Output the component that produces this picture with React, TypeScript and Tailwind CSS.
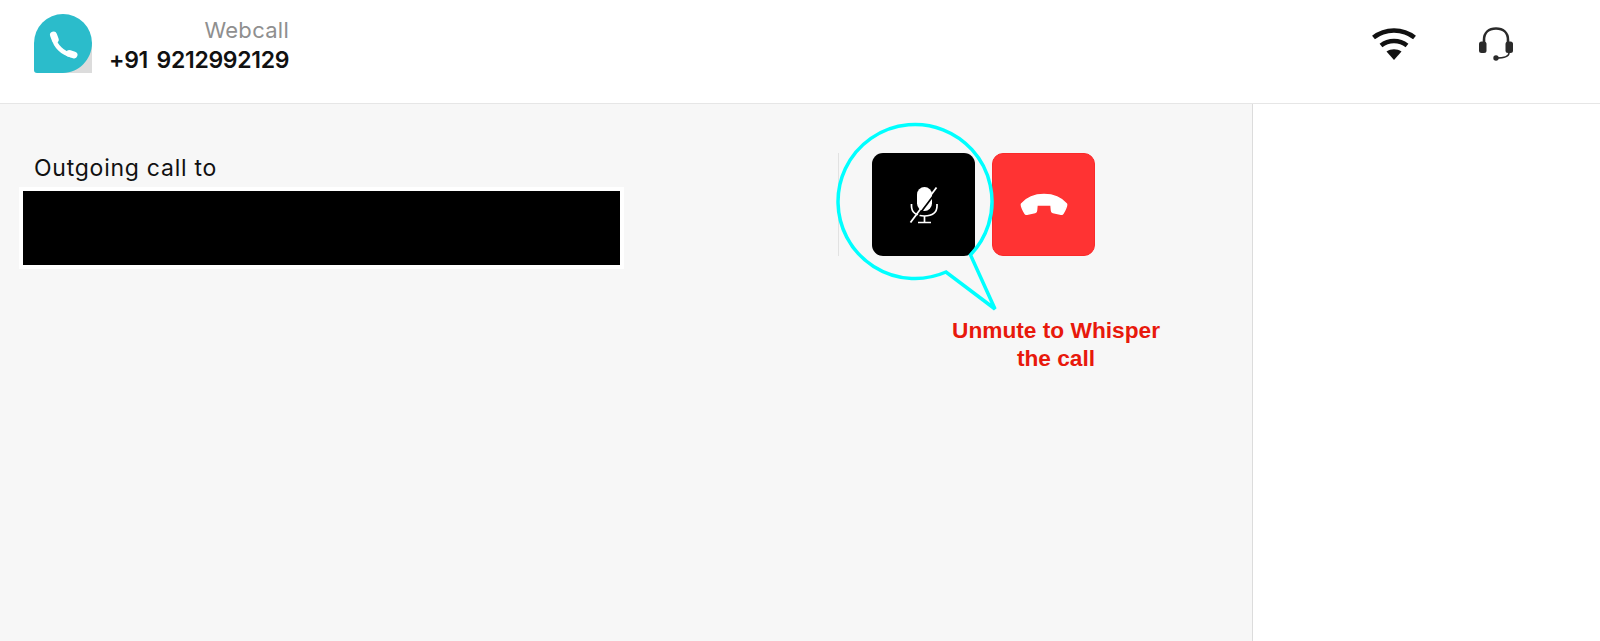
function Logo() {
  return (
    <svg width="60" height="60" viewBox="0 0 60 60" fill="none">
      <rect x="30" y="30" width="28" height="29" fill="#dcdcdc" />
      <path d="M29 0a29 29 0 0 1 29 29c0 16-13 30-29 30H3a3 3 0 0 1-3-3V29A29 29 0 0 1 29 0Z" fill="#2bbccb" />
      <path d="M20 24C21 32 29 39.500 37 41" stroke="white" strokeWidth="4.500" strokeLinecap="round" />
      <path d="M19.500 21l1.700 4.500M35.500 39.500l4.500 1.500" stroke="white" strokeWidth="7" strokeLinecap="round" />
    </svg>
  )
}

function WifiIcon() {
  return (
    <svg width="44" height="33" viewBox="0 0 44 33" fill="none">
      <path d="M1.500 10.500C13 1 31 1 42.500 10.500" stroke="#111" strokeWidth="4.500" />
      <path d="M9 18.500C16.500 12.500 27.500 12.500 35 18.500" stroke="#111" strokeWidth="4.500" />
      <path d="M14.500 24.500C19 21.500 25 21.500 29.500 24.500L22 33Z" fill="#111" />
    </svg>
  )
}

function HeadsetIcon() {
  return (
    <svg width="34" height="34" viewBox="0 0 34 34" fill="none">
      <path d="M5 16V13C5 5.500 10 1.500 17 1.500S29 5.500 29 13v3" stroke="#2a2a2a" strokeWidth="2.600" />
      <rect x="0" y="14.500" width="7.500" height="11.500" rx="2.500" fill="#2a2a2a" />
      <rect x="26.500" y="14.500" width="7.500" height="11.500" rx="2.500" fill="#2a2a2a" />
      <path d="M30 26c0 3-3 5-13 5" stroke="#2a2a2a" strokeWidth="1.500" />
      <circle cx="17" cy="31" r="2.700" fill="#2a2a2a" />
    </svg>
  )
}

function MutedMicIcon() {
  return (
    <svg width="30" height="38" viewBox="0 0 30 38" fill="none">
      <rect x="8" y="1" width="15" height="24" rx="7.500" fill="white" />
      <path d="M2.500 18v2c0 6.500 5 10 13 10S28 26.500 28 20v-2" stroke="white" strokeWidth="1.700" />
      <path d="M15.500 30v6M9 36.500h13" stroke="white" strokeWidth="1.700" />
      <path d="M29 3.500 4.500 36" stroke="black" strokeWidth="1.800" />
      <path d="M27.500 1.500 1.500 36.500" stroke="white" strokeWidth="1.800" />
    </svg>
  )
}

function HangupIcon() {
  return (
    <svg width="48" height="23" viewBox="0 0 48 23" fill="white">
      <path
        d="M1.500 11C7 4.500 15 1.500 24 1.500S41 4.500 46.500 11c.500 1-1.500 6-3.500 9.500-.500 1-1 1-2 .8L33 19.500c-1-.3-1.500-1-1.500-2L31 12H17l-.5 5.500c0 1-.5 1.700-1.500 2L7 21.300c-1 .2-1.500.2-2-.8C3 17 1 12 1.500 11Z"
        stroke="white"
        strokeWidth="1.500"
        strokeLinejoin="round"
      />
    </svg>
  )
}

// callout ring round the mute button
function Callout() {
  return (
    <svg className="absolute left-[830px] top-[116px] pointer-events-none" width="175" height="200" viewBox="830 116 175 200" fill="none">
      <path
        d="M970.500 254.900A77 77 0 1 0 946 272L995 309Z"
        stroke="#0ff"
        strokeWidth="3.500"
      />
    </svg>
  )
}

export default function App() {
  return (
    <div className="relative h-[641px] w-[1600px] overflow-hidden bg-white font-['Inter',sans-serif]">
      <header className="flex h-[104px] items-start border-b border-[#e6e6e6] bg-white">
        <div className="ml-[34px] mt-[14px]">
          <Logo />
        </div>
        <div className="ml-[15px] mt-[15px] flex flex-col items-end">
          <span className="text-[22px] leading-[30px] tracking-[0.3px] text-[#8f8f8f]">Webcall</span>
          <span className="text-[23px] font-semibold leading-[30px] tracking-[-0.3px] text-[#111] [word-spacing:3px]">+91 9212992129</span>
        </div>
        <div className="ml-auto mr-[87px] mt-[27px] flex items-start gap-[63px]">
          <WifiIcon />
          <HeadsetIcon />
        </div>
      </header>

      <main className="flex h-[537px]">
        <section className="flex w-[1253px] items-start border-r border-[#dcdcdc] bg-[#f7f7f7] pt-[49px]">
          <div className="flex w-[838px] flex-col pl-[19px]">
            <span className="relative top-[1px] pl-[15px] text-[23px] leading-[28px] tracking-[0.75px] text-[#111]">Outgoing call to</span>
            <div className="mt-[6px] h-[82px] w-[605px] border-4 border-white bg-black" />
          </div>
          <div className="flex h-[103px] items-center gap-[17px] border-l border-[#e2e2e2] pl-[33px]">
            <button className="flex h-[103px] w-[103px] items-center justify-center rounded-[11px] bg-black">
              <MutedMicIcon />
            </button>
            <button className="flex h-[103px] w-[103px] items-center justify-center rounded-[11px] border border-[#fa2a2a] bg-[#ff3333]">
              <HangupIcon />
            </button>
          </div>
        </section>
        <aside className="flex-1 bg-white" />
      </main>

      <Callout />
      <p className="absolute left-[926px] top-[316px] w-[260px] text-center font-['Liberation_Sans',sans-serif] text-[22.7px] font-bold leading-[28px] text-[#e8190c]">
        Unmute to Whisper
        <br />
        the call
      </p>
    </div>
  )
}
